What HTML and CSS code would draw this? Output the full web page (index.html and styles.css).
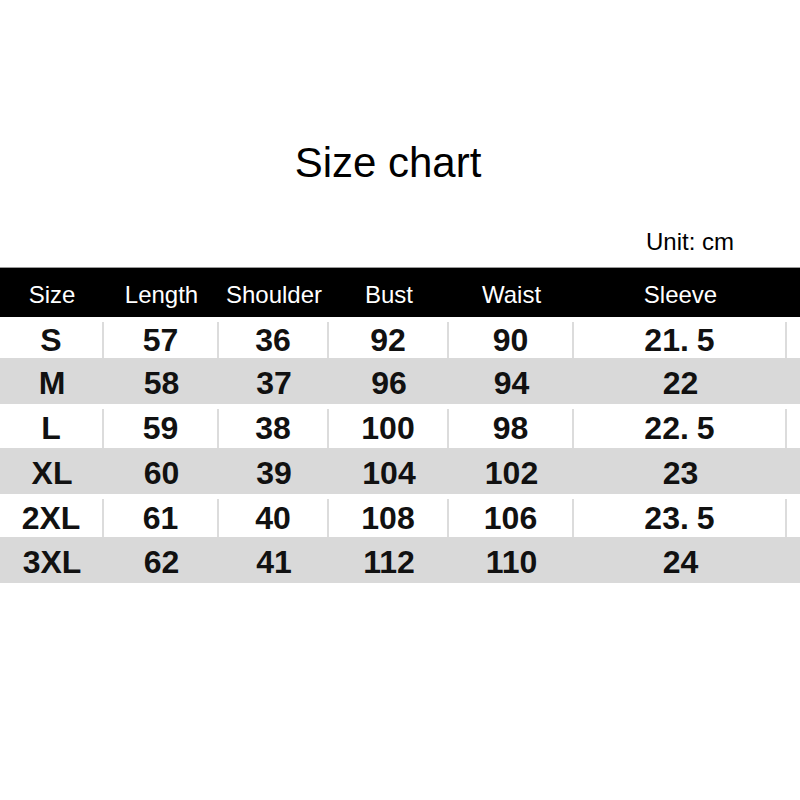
FILE: index.html
```html
<!DOCTYPE html>
<html>
<head>
<meta charset="utf-8">
<link rel="stylesheet" href="styles.css">
</head>
<body>
<div class="page">
  <h1 class="title">Size chart</h1>
  <div class="unit">Unit: cm</div>
  <div class="chart">
    <div class="row head">
      <div class="cell">Size</div><div class="cell">Length</div><div class="cell">Shoulder</div><div class="cell">Bust</div><div class="cell">Waist</div><div class="cell">Sleeve</div><div class="cell end"></div>
    </div>
    <div class="row odd r1">
      <div class="cell">S</div><div class="cell">57</div><div class="cell">36</div><div class="cell">92</div><div class="cell">90</div><div class="cell">21<span class="dot">.</span>5</div><div class="cell end"></div>
    </div>
    <div class="row even r2">
      <div class="cell">M</div><div class="cell">58</div><div class="cell">37</div><div class="cell">96</div><div class="cell">94</div><div class="cell">22</div><div class="cell end"></div>
    </div>
    <div class="row odd r3">
      <div class="cell">L</div><div class="cell">59</div><div class="cell">38</div><div class="cell">100</div><div class="cell">98</div><div class="cell">22<span class="dot">.</span>5</div><div class="cell end"></div>
    </div>
    <div class="row even r4">
      <div class="cell">XL</div><div class="cell">60</div><div class="cell">39</div><div class="cell">104</div><div class="cell">102</div><div class="cell">23</div><div class="cell end"></div>
    </div>
    <div class="row odd r5">
      <div class="cell">2XL</div><div class="cell">61</div><div class="cell">40</div><div class="cell">108</div><div class="cell">106</div><div class="cell">23<span class="dot">.</span>5</div><div class="cell end"></div>
    </div>
    <div class="row even r6">
      <div class="cell">3XL</div><div class="cell">62</div><div class="cell">41</div><div class="cell">112</div><div class="cell">110</div><div class="cell">24</div><div class="cell end"></div>
    </div>
  </div>
</div>
</body>
</html>
```

FILE: styles.css
```css
html, body {
  margin: 0;
  padding: 0;
  background: #ffffff;
}
body {
  font-family: "Liberation Sans", Arial, sans-serif;
  color: #000;
}
.page {
  width: 800px;
  height: 800px;
  padding-top: 139px;
  box-sizing: border-box;
  display: flex;
  flex-direction: column;
}
.title {
  margin: 0;
  font-size: 42px;
  font-weight: normal;
  line-height: 48px;
  text-align: center;
  padding-right: 24px;
}
.unit {
  margin-top: 42px;
  font-size: 24px;
  line-height: 26px;
  text-align: right;
  padding-right: 66px;
}
.chart {
  margin-top: 12px;
  display: flex;
  flex-direction: column;
}
.row {
  display: grid;
  grid-template-columns: 104px 115px 110px 120px 125px 213px 1fr;
}
.cell {
  display: flex;
  align-items: center;
  justify-content: center;
  box-sizing: border-box;
}
.head {
  background: #000;
  color: #fff;
  height: 50px;
  border-top: 1px solid #9a9a9a;
  font-size: 24px;
  padding-top: 4px;
  box-sizing: border-box;
}
.odd, .even {
  font-weight: bold;
  font-size: 32px;
  padding-top: 5px;
  box-sizing: border-box;
  color: #111;
}
.odd {
  background: #ffffff;
}
.odd .cell:not(.end) {
  border-right: 2px solid #dcdcdc;
}
.even {
  background: #d9d9d9;
}
.r1 { height: 41px; }
.r2 { height: 46px; }
.r3 { height: 44px; }
.r4 { height: 46px; }
.r5 { height: 43px; }
.r6 { height: 46px; }
.dot {
  margin-right: 8px;
}
```
